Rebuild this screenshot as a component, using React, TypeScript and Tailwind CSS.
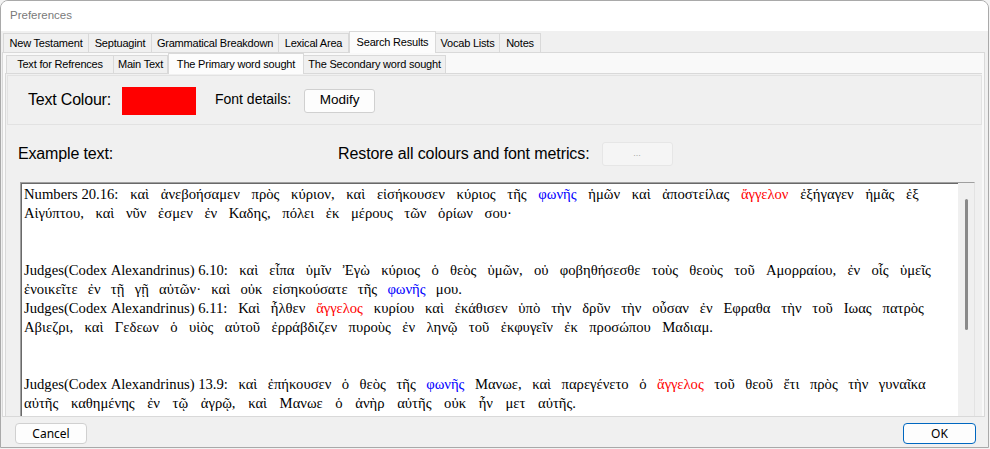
import React from "react";

type Seg = [string, string?];

const BLUE = "text-[#0000ff]";
const RED = "text-[#ff0000]";

function Line({ segs, w }: { segs: Seg[]; w: string }) {
  const words: { t: string; c?: string }[] = [];
  segs.forEach(([t, c]) => {
    t.split(" ")
      .filter((x) => x.length > 0)
      .forEach((x) => words.push({ t: x, c }));
  });
  return (
    <div className={`flex justify-between gap-x-[3px] h-[19px] leading-[19px] ${w}`}>
      {words.map((wd, i) => (
        <span key={i} className={`shrink-0 whitespace-pre ${wd.c ?? ""}`}>
          {wd.t}
        </span>
      ))}
    </div>
  );
}

function Blank() {
  return <div className="h-[19px]" />;
}

function OuterTab({ label, w, sel }: { label: string; w: string; sel?: boolean }) {
  if (sel) {
    return (
      <div
        className={`relative z-10 -mb-px flex h-[22px] items-start justify-center border border-b-0 border-[#d9d9d9] bg-[#fcfcfc] pt-[2px] ${w}`}
      >
        {label}
      </div>
    );
  }
  return (
    <div
      className={`flex h-[19px] items-center justify-center border-t border-r border-[#d9d9d9] bg-[#f0f0f0] ${w}`}
    >
      {label}
    </div>
  );
}

const NB = "\u00a0";

export default function App() {
  return (
    <div className="relative h-[449px] w-[990px] overflow-hidden bg-[#f3f3f3] font-['Liberation_Sans',Arial,sans-serif] text-black">
      <div className="flex h-[448px] w-[989px] flex-col overflow-hidden rounded-t-[8px] border border-[#a9a9a9] bg-[#f0f0f0]">
        {/* title bar */}
        <div className="flex h-[30px] shrink-0 items-center bg-white pl-[9px] text-[11.5px] text-[#7a7a7a]">
          Preferences
        </div>

        {/* outer tabs */}
        <div className="flex h-[21px] shrink-0 items-end pl-[2px] text-[11px] tracking-[-0.2px]">
          <div className="flex h-[19px] w-[86px] items-center justify-center border-t border-r border-l border-[#d9d9d9] bg-[#f0f0f0]">
            New Testament
          </div>
          <OuterTab label="Septuagint" w="w-[63px]" />
          <OuterTab label="Grammatical Breakdown" w="w-[127px]" />
          <OuterTab label="Lexical Area" w="w-[70px]" />
          <OuterTab label="Search Results" w="w-[87px]" sel />
          <OuterTab label="Vocab Lists" w="w-[64px]" />
          <OuterTab label="Notes" w="w-[41px]" />
        </div>

        {/* outer panel */}
        <div className="ml-[1px] flex h-[365px] w-[983px] shrink-0 flex-col border border-[#d9d9d9] bg-[#f9f9f9]">
          {/* inner tabs */}
          <div className="flex h-[20px] shrink-0 items-end pl-[3px] text-[11px] tracking-[-0.2px]">
            <div className="flex h-[18px] w-[108px] items-center justify-center border-t border-r border-l border-[#d9d9d9] bg-[#f0f0f0]">
              Text for Refrences
            </div>
            <div className="flex h-[18px] w-[54px] items-center justify-center border-t border-r border-[#d9d9d9] bg-[#f0f0f0]">
              Main Text
            </div>
            <div className="relative z-10 -mb-px flex h-[21px] w-[136px] items-start justify-center border border-b-0 border-[#d9d9d9] bg-[#fcfcfc] pt-[2px]">
              The Primary word sought
            </div>
            <div className="flex h-[18px] w-[142px] items-center justify-center border-t border-r border-[#d9d9d9] bg-[#f0f0f0]">
              The Secondary word sought
            </div>
          </div>

          {/* inner panel */}
          <div className="ml-[2px] flex min-h-0 w-[977px] flex-1 flex-col overflow-hidden border-t border-l border-[#d9d9d9] bg-[#f0f0f0]">
            {/* group box */}
            <div className="mt-[1px] ml-[1px] flex h-[50px] w-[975px] shrink-0 items-center border border-[#e2e2e2] bg-[#f0f0f0]">
              <span className="ml-[20px] text-[16px] tracking-[-0.2px]">Text Colour:</span>
              <div className="ml-[11px] mt-[1px] h-[28px] w-[74px] bg-[#ff0000]" />
              <span className="ml-[19px] -mt-[2px] text-[14px]">Font details:</span>
              <div className="ml-[13px] mt-[1px] flex h-[24px] w-[71px] items-center justify-center rounded-[3px] border border-[#d0d0d0] bg-[#fdfdfd] text-[13.5px]">
                Modify
              </div>
            </div>

            {/* example row */}
            <div className="mt-[17px] flex h-[24px] shrink-0 items-center">
              <span className="ml-[12px] text-[16px] tracking-[-0.15px]">Example text:</span>
              <span className="ml-[225px] text-[16px] tracking-[-0.1px]">
                Restore all colours and font metrics:
              </span>
              <div className="ml-[12px] flex h-[24px] w-[71px] items-center justify-center rounded-[3px] border border-[#e6e6e6] bg-[#f5f5f5] text-[9px] text-[#a8a8a8]">
                ...
              </div>
            </div>

            {/* text box */}
            <div className="mt-[16px] ml-[14px] flex min-h-0 w-[955px] flex-1 overflow-hidden border-t border-l border-r border-t-[#a0a0a0] border-l-[#a0a0a0] border-r-[#e3e3e3] bg-white shadow-[inset_1px_1px_0_#696969]">
              <div className="min-w-0 flex-1 pt-[2px] pl-[3px] font-['Liberation_Serif','DejaVu_Serif','Times_New_Roman',serif] text-[14.67px]">
                <Line
                  w="w-[895px]"
                  segs={[
                    [`Numbers${NB}20.16: καὶ ἀνεβοήσαμεν πρὸς κύριον, καὶ εἰσήκουσεν κύριος τῆς`],
                    ["φωνῆς", BLUE],
                    ["ἡμῶν καὶ ἀποστείλας"],
                    ["ἄγγελον", RED],
                    ["ἐξήγαγεν ἡμᾶς ἐξ"],
                  ]}
                />
                <Line
                  w="w-[488px]"
                  segs={[["Αἰγύπτου, καὶ νῦν ἐσμεν ἐν Καδης, πόλει ἐκ μέρους τῶν ὁρίων σου·"]]}
                />
                <Blank />
                <Blank />
                <Line
                  w="w-[907px]"
                  segs={[
                    [
                      `Judges(Codex${NB}Alexandrinus)${NB}6.10: καὶ εἶπα ὑμῖν Ἐγὼ κύριος ὁ θεὸς ὑμῶν, οὐ φοβηθήσεσθε τοὺς θεοὺς τοῦ Αμορραίου, ἐν οἷς ὑμεῖς`,
                    ],
                  ]}
                />
                <Line
                  w="w-[438px]"
                  segs={[
                    ["ἐνοικεῖτε ἐν τῇ γῇ αὐτῶν· καὶ οὐκ εἰσηκούσατε τῆς"],
                    ["φωνῆς", BLUE],
                    ["μου."],
                  ]}
                />
                <Line
                  w="w-[900px]"
                  segs={[
                    [`Judges(Codex${NB}Alexandrinus)${NB}6.11: Καὶ ἦλθεν`],
                    ["ἄγγελος", RED],
                    ["κυρίου καὶ ἐκάθισεν ὑπὸ τὴν δρῦν τὴν οὖσαν ἐν Εφραθα τὴν τοῦ Ιωας πατρὸς"],
                  ]}
                />
                <Line
                  w="w-[689px]"
                  segs={[
                    [
                      "Αβιεζρι, καὶ Γεδεων ὁ υἱὸς αὐτοῦ ἐρράβδιζεν πυροὺς ἐν ληνῷ τοῦ ἐκφυγεῖν ἐκ προσώπου Μαδιαμ.",
                    ],
                  ]}
                />
                <Blank />
                <Blank />
                <Line
                  w="w-[902px]"
                  segs={[
                    [`Judges(Codex${NB}Alexandrinus)${NB}13.9: καὶ ἐπήκουσεν ὁ θεὸς τῆς`],
                    ["φωνῆς", BLUE],
                    ["Μανωε, καὶ παρεγένετο ὁ"],
                    ["ἄγγελος", RED],
                    ["τοῦ θεοῦ ἔτι πρὸς τὴν γυναῖκα"],
                  ]}
                />
                <Line
                  w="w-[552px]"
                  segs={[
                    ["αὐτῆς καθημένης ἐν τῷ ἀγρῷ, καὶ Μανωε ὁ ἀνὴρ αὐτῆς οὐκ ἦν μετ αὐτῆς."],
                  ]}
                />
              </div>
              {/* scrollbar */}
              <div className="flex w-[16px] shrink-0 justify-center bg-[#f0f0f0] pt-[16px]">
                <div className="h-[131px] w-[3px] rounded-full bg-[#8a8a8a]" />
              </div>
            </div>
          </div>
        </div>

        {/* bottom bar */}
        <div className="flex flex-1 items-start justify-between pr-[12px] pl-[14px] pt-[6px] font-['Noto_Sans','Liberation_Sans',sans-serif] text-[12px]">
          <div className="flex h-[21px] w-[72px] items-center justify-center rounded-[4px] border border-[#d0d0d0] bg-[#fdfdfd]">
            Cancel
          </div>
          <div className="flex h-[21px] w-[73px] items-center justify-center rounded-[4px] border border-[#0067c0] bg-[#fdfdfd]">
            OK
          </div>
        </div>
      </div>
    </div>
  );
}
